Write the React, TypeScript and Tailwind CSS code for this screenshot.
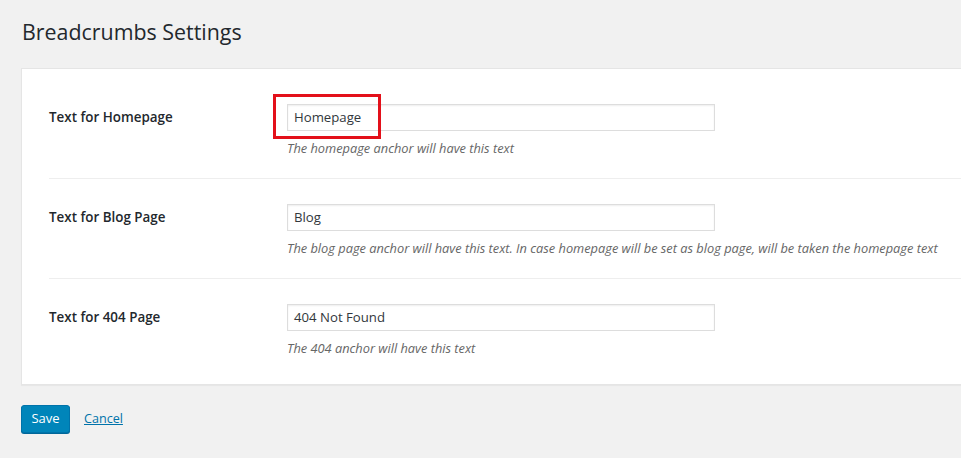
import React from "react";

const font = { fontFamily: '"Open Sans", "Noto Sans", Arial, sans-serif' };

function Row({
  label,
  value,
  desc,
  first,
  last,
  highlight,
}: {
  label: string;
  value: string;
  desc: string;
  first?: boolean;
  last?: boolean;
  highlight?: boolean;
}) {
  return (
    <div
      className={`flex ${first ? "pt-[35px]" : "pt-[25px]"} ${
        last ? "pb-[27px]" : "pb-[21px] border-b border-[#eeeeee]"
      }`}
    >
      <div className="w-[238px] shrink-0 pt-[3px] text-[13.4px] leading-[20px] font-semibold text-[#23282d]">
        {label}
      </div>
      <div className="flex flex-col">
        <div className="relative w-[428px]">
          <div className="h-[27px] w-[428px] border border-[#dddddd] bg-white px-[6px] text-[13.2px] leading-[25px] text-[#32373c] shadow-[inset_0_1px_2px_rgba(0,0,0,0.07)]">
            {value}
          </div>
          {highlight && (
            <div className="absolute left-[-14px] top-[-10px] h-[45px] w-[108px] border-[3px] border-[#e3101a]" />
          )}
        </div>
        <div className="mt-[8px] text-[12.8px] leading-[18px] italic text-[#666666] whitespace-nowrap">
          {desc}
        </div>
      </div>
    </div>
  );
}

export default function App() {
  return (
    <div className="min-h-[458px] w-full overflow-hidden bg-[#f1f1f1]" style={font}>
      <div className="pl-[21px] pt-[17px]">
        <h1 className="pl-[1px] text-[21.4px] leading-[30px] font-normal text-[#23282d]">
          Breadcrumbs Settings
        </h1>
        <div className="mt-[21px] w-[1000px] border border-[#e5e5e5] bg-white pl-[27px] shadow-[0_1px_1px_rgba(0,0,0,0.04)]">
          <Row
            first
            highlight
            label="Text for Homepage"
            value="Homepage"
            desc="The homepage anchor will have this text"
          />
          <Row
            label="Text for Blog Page"
            value="Blog"
            desc="The blog page anchor will have this text. In case homepage will be set as blog page, will be taken the homepage text"
          />
          <Row
            last
            label="Text for 404 Page"
            value="404 Not Found"
            desc="The 404 anchor will have this text"
          />
        </div>
        <div className="mt-[20px] flex items-center gap-[14px]">
          <button className="h-[28px] w-[49px] rounded-[3px] border border-[#0073aa] bg-[#0085ba] text-[13px] text-white shadow-[0_1px_0_#006799]">
            Save
          </button>
          <a href="#" className="text-[12.6px] text-[#0073aa] underline">
            Cancel
          </a>
        </div>
      </div>
    </div>
  );
}
